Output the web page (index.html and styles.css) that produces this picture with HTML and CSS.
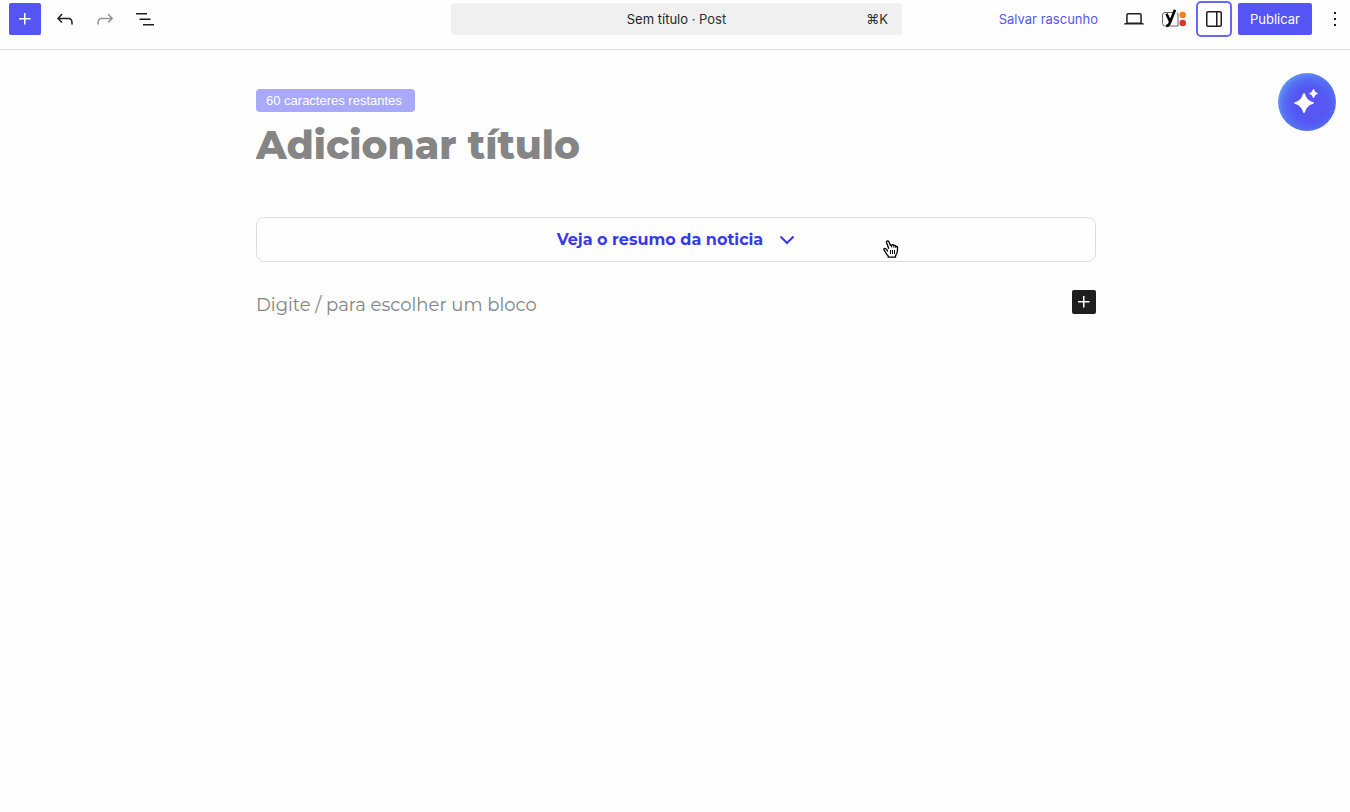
FILE: index.html
```html
<!doctype html>
<html lang="pt-BR">
  <head>
    <meta charset="UTF-8" />
    <meta name="viewport" content="width=device-width, initial-scale=1.0" />
    <title>Sem título</title>
    <link rel="stylesheet" href="styles.css">
  </head>
  <body>
    <!-- Header -->
    <header class="top-bar">
      <div class="tools">
        <button class="icon-button primary" type="button">
          <svg viewBox="0 0 24 24"><path d="M11 12.5V17.5H12.5V12.5H17.5V11H12.5V6H11V11H6V12.5H11Z" /></svg>
        </button>
        <button class="icon-button" type="button">
          <svg viewBox="0 0 24 24"><path d="M18.3 11.7c-.6-.6-1.4-.9-2.3-.9H6.7l2.9-3.3-1.1-1-4.5 5L8.5 16l1-1-2.7-2.7H16c.5 0 .9.2 1.3.5 1 1 1 3.4 1 4.5v.3h1.5v-.2c0-1.5 0-4.3-1.5-5.7z" /></svg>
        </button>
        <button class="icon-button" type="button" disabled>
          <svg viewBox="0 0 24 24"><path d="M15.6 6.5l-1.1 1 2.9 3.3H8c-.9 0-1.7.3-2.3.9-1.4 1.5-1.4 4.2-1.4 5.6v.2h1.5v-.3c0-1.1 0-3.5 1-4.5.3-.3.7-.5 1.3-.5h9.2L14.5 15l1.1 1.1 4.6-4.6-4.6-5z" /></svg>
        </button>
        <button class="icon-button" type="button">
          <svg viewBox="0 0 24 24"><path d="M3 6h11v1.5H3V6Zm3.5 5.5h11V13h-11v-1.5ZM21 17H10v1.5h11V17Z" /></svg>
        </button>
      </div>

      <button class="document-bar" type="button">
        <span class="document-title">Sem título <span class="document-type">· Post</span></span>
        <span class="shortcut">⌘K</span>
      </button>

      <div class="settings">
        <button class="save-draft" type="button">Salvar rascunho</button>
        <button class="icon-button" type="button">
          <svg viewBox="0 0 24 24"><path d="M20.5 16h-.7V8c0-1.1-.9-2-2-2H6.2c-1.1 0-2 .9-2 2v8h-.7c-.8 0-1.5.7-1.5 1.5h20c0-.8-.7-1.5-1.5-1.5zM5.7 8c0-.3.2-.5.5-.5h11.6c.3 0 .5.2.5.5v7.6H5.7V8z" /></svg>
        </button>
        <button class="icon-button" type="button">
          <svg class="yoast" viewBox="0 0 26 20">
            <path class="yoast-frame" d="M12 3.5H4Q1.500 3.500 1.500 6V14.500Q1.500 17 4 17H17V6Q17 4.500 16 3.500" />
            <path class="yoast-mark" d="M5.500 4.800L9.300 13M14 .8L9 13.500Q7.800 16.800 5.200 17" />
            <circle class="readability" cx="21.700" cy="6" r="3.300" />
            <circle class="seo" cx="21.700" cy="14" r="3.300" />
          </svg>
        </button>
        <button class="icon-button pressed" type="button">
          <svg viewBox="0 0 24 24"><path d="M18 4H6c-1.100 0-2 .9-2 2v12c0 1.100.9 2 2 2h12c1.100 0 2-.9 2-2V6c0-1.100-.9-2-2-2zm-4 14.500H6c-.3 0-.5-.2-.5-.5V6c0-.3.2-.5.5-.5h8v13zm4.500-.5c0 .3-.2.5-.5.5h-2.500v-13H18c.3 0 .5.2.5.5v12z" /></svg>
        </button>
        <button class="publish" type="button">Publicar</button>
        <button class="icon-button more" type="button">
          <svg viewBox="0 0 24 24"><path d="M13 19h-2v-2h2v2zm0-6h-2v-2h2v2zm0-6h-2V5h2v2z" /></svg>
        </button>
      </div>
    </header>

    <!-- Editor -->
    <main class="editor">
      <div class="content">
        <label class="counter" for="post-title">60 caracteres restantes</label>
        <input class="post-title" id="post-title" type="text" maxlength="60" placeholder="Adicionar título" />

        <button class="summary" type="button">
          Veja o resumo da noticia
          <svg class="chevron" viewBox="0 0 16 16"><path d="M1.500 4.500L8 11L14.500 4.500" /></svg>
        </button>

        <div class="block-row">
          <input class="block-input" type="text" placeholder="Digite / para escolher um bloco" />
          <button class="add-block" type="button">
            <svg viewBox="0 0 24 24"><path d="M11 12.5V17.5H12.5V12.5H17.5V11H12.5V6H11V11H6V12.5H11Z" /></svg>
          </button>
        </div>
      </div>
    </main>

    <!-- Floating assistant button -->
    <button class="assistant" type="button">
      <svg viewBox="0 0 26 26"><path d="M10 4Q10.800 4 11.200 5.500Q13 11.500 18.500 13Q20 13.500 20 14Q20 14.500 18.500 15Q13 16.500 11.200 22.500Q10.800 24 10 24Q9.200 24 8.800 22.500Q7 16.500 1.500 15Q0 14.500 0 14Q0 13.500 1.500 13Q7 11.500 8.800 5.500Q9.200 4 10 4ZM19.500 0Q20 0 20.200 .8Q20.800 3.300 23.200 4Q24 4.200 24 4.500Q24 4.800 23.200 5Q20.800 5.700 20.200 8.200Q20 9 19.500 9Q19 9 18.800 8.200Q18.200 5.700 15.800 5Q15 4.800 15 4.500Q15 4.200 15.800 4Q18.200 3.300 18.800 .8Q19 0 19.500 0Z" /></svg>
    </button>

    <!-- Hand pointer -->
    <svg class="pointer" viewBox="0 0 16 18">
      <path d="M4.700 11.500L3.800 9.700Q2.600 8.100 1.300 8.500Q.4 9 1.200 10.200L3.300 13.500Q4 15 5.200 15.900V17.200H12.500V15.700Q14.500 13 14.500 10V7.200Q14.200 6 12.900 6.400V6.200Q12.300 5 10.900 5.500Q10.200 4.400 8.700 5L7.400 5.200L5.900 1.800Q5.200 .6 4.100 1.100Q3.200 1.600 3.600 2.800L5.800 8.800" />
      <path class="lines" d="M7.500 10V14M9.500 10V14M11.500 10V14M8.700 5V7.500M10.900 5.500V7.700M12.900 6.400V8" />
    </svg>
  </body>
</html>
```
FILE: styles.css
```css
/* General Styling */
* {
  box-sizing: border-box;
}

body {
  margin: 0;
  background-color: #fefefe;
  color: #1e1e1e;
  font-family: Inter, sans-serif;
  font-size: 13px;
}

button {
  border: none;
  padding: 0;
  background: none;
  color: inherit;
  font: inherit;
  cursor: pointer;
}

input {
  border: none;
  padding: 0;
  outline: none;
  background: none;
}

svg {
  display: block;
  flex: none;
  fill: currentColor;
}

/* Header */
.top-bar {
  display: grid;
  grid-template-columns: 1fr minmax(0, 451px) 1fr;
  padding: 3px 0 14px 3px;
  border-bottom: 1px solid #dcdcdc;
}

.tools,
.settings {
  display: flex;
  gap: 8px;
}

.tools {
  padding-left: 6px;
}

.settings {
  justify-content: flex-end;
}

.icon-button {
  display: flex;
  align-items: center;
  justify-content: center;
  width: 32px;
  height: 32px;
  border-radius: 2px;
}

.icon-button svg {
  width: 24px;
  height: 24px;
}

.icon-button:disabled {
  color: #949494;
}

.primary,
.publish {
  background-color: #5555f5;
  color: #fff;
}

.pressed {
  border-radius: 3px;
  box-shadow: 0 0 0 2px #6868f5;
}

.more {
  width: 30px;
}

.document-bar {
  display: grid;
  grid-template-columns: 1fr auto 1fr;
  align-items: center;
  height: 32px;
  padding: 0 14px;
  border-radius: 4px;
  background-color: #f0f0f0;
}

.document-title {
  grid-column: 2;
}

.document-type,
.shortcut {
  color: #2f2f2f;
}

.shortcut {
  justify-self: end;
}

.save-draft {
  padding: 0 12px;
  color: #5555f5;
}

.publish {
  padding: 0 12px;
  border-radius: 2px;
}

.icon-button .yoast {
  width: 26px;
  height: 20px;
}

.yoast-frame {
  fill: none;
  stroke: #666;
}

.yoast-mark {
  fill: none;
  stroke: #000;
  stroke-width: 2.6;
}

.readability {
  fill: #f58220;
}

.seo {
  fill: #dc3232;
}

/* Editor */
.editor {
  padding: 39px 16px 0 18px;
}

.content {
  display: flex;
  flex-direction: column;
  align-items: flex-start;
  max-width: 840px;
  margin: 0 auto;
}

.counter {
  padding: 0 13px 0 10px;
  border-radius: 4px;
  background-color: #a9a9fb;
  color: #fff;
  font-family: "Liberation Sans", Arial, sans-serif;
  font-size: 13px;
  line-height: 23px;
}

.post-title {
  width: 100%;
  height: 56px;
  margin-top: 5px;
  font-family: Montserrat, Inter, sans-serif;
  font-size: 39px;
  font-weight: 800;
}

.post-title::placeholder,
.block-input::placeholder {
  color: #858585;
  opacity: 1;
}

.summary {
  display: flex;
  align-items: center;
  justify-content: center;
  gap: 16px;
  width: 100%;
  height: 45px;
  margin-top: 44px;
  border: 1px solid #dedede;
  border-radius: 8px;
  color: #3838ef;
  font-family: Montserrat, Inter, sans-serif;
  font-size: 16px;
  font-weight: 700;
}

.chevron {
  width: 16px;
  height: 16px;
  fill: none;
  stroke: currentColor;
  stroke-width: 2;
}

.block-row {
  display: flex;
  width: 100%;
  margin-top: 28px;
}

.block-input {
  flex: 1;
  height: 30px;
  font-family: Montserrat, Inter, sans-serif;
  font-size: 18px;
}

.add-block {
  width: 24px;
  height: 24px;
  border-radius: 2px;
  background-color: #1e1e1e;
  color: #fff;
}

/* Floating assistant button */
.assistant {
  position: fixed;
  top: 73px;
  right: 14px;
  display: flex;
  align-items: center;
  justify-content: center;
  width: 58px;
  height: 58px;
  border-radius: 50%;
  background: radial-gradient(circle at 56% 55%, #5a55f5 0, #5558f3 40%, #5570f3 60%, #63a0f5 76%);
  color: #fff;
}

.assistant svg {
  width: 26px;
  height: 26px;
}

/* Hand pointer */
.pointer {
  position: absolute;
  top: 240px;
  left: 883px;
  width: 16px;
  height: 18px;
  fill: #fff;
  stroke: #000;
  stroke-width: 1.3;
  pointer-events: none;
}

.pointer .lines {
  fill: none;
  stroke-width: 1;
}
```
